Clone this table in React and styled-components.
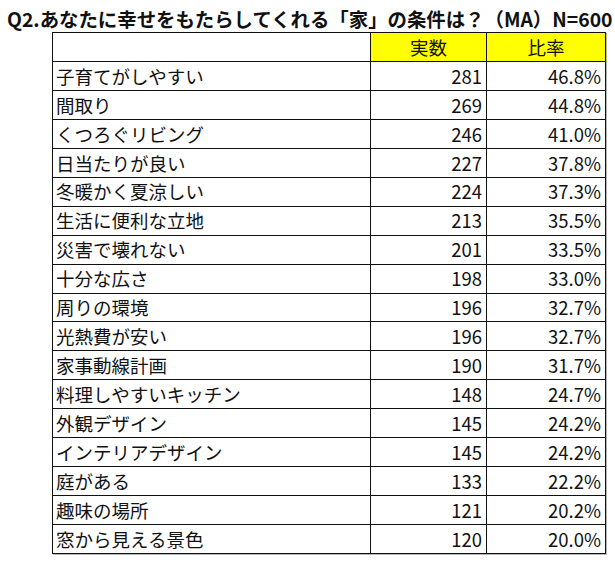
import React from "react";
import styled, { createGlobalStyle } from "styled-components";

const GlobalStyle = createGlobalStyle`
  body {
    margin: 0;
    background: #fff;
    font-family: "Noto Sans CJK JP", "Noto Sans", sans-serif;
    color: #111;
  }
`;

const Root = styled.div`
  width: 615px;
  height: 567px;
  padding: 6px 0 0 0;
  box-sizing: border-box;
`;

const Title = styled.h1`
  margin: 0 0 0 7px;
  font-size: 19.4px;
  font-weight: bold;
  line-height: 26px;
  white-space: nowrap;
`;

const Table = styled.table`
  margin: 0 0 0 52px;
  width: 553px;
  border-collapse: collapse;
  table-layout: fixed;
  box-shadow: 1px 1px 0 #b8b8b8;
`;

const Head = styled.th`
  height: 28px;
  padding: 0;
  border: 1px solid #111;
  background: ${(p) => (p.$blank ? "#fff" : "#ffff00")};
  font-size: 18.5px;
  font-weight: normal;
  text-align: center;
  line-height: 1;
`;

const Cell = styled.td`
  height: 27.95px;
  padding: 0 ${(p) => (p.$num ? "4px" : "0")} 0 ${(p) => (p.$num ? "0" : "3px")};
  border: 1px solid #111;
  font-size: 18.5px;
  text-align: ${(p) => (p.$num ? "right" : "left")};
  line-height: 1;
  white-space: nowrap;
`;

const rows = [
  ["子育てがしやすい", 281, "46.8%"],
  ["間取り", 269, "44.8%"],
  ["くつろぐリビング", 246, "41.0%"],
  ["日当たりが良い", 227, "37.8%"],
  ["冬暖かく夏涼しい", 224, "37.3%"],
  ["生活に便利な立地", 213, "35.5%"],
  ["災害で壊れない", 201, "33.5%"],
  ["十分な広さ", 198, "33.0%"],
  ["周りの環境", 196, "32.7%"],
  ["光熱費が安い", 196, "32.7%"],
  ["家事動線計画", 190, "31.7%"],
  ["料理しやすいキッチン", 148, "24.7%"],
  ["外観デザイン", 145, "24.2%"],
  ["インテリアデザイン", 145, "24.2%"],
  ["庭がある", 133, "22.2%"],
  ["趣味の場所", 121, "20.2%"],
  ["窓から見える景色", 120, "20.0%"],
];

export default function App() {
  return (
    <Root>
      <GlobalStyle />
      <Title>Q2.あなたに幸せをもたらしてくれる「家」の条件は？（MA）N=600</Title>
      <Table>
        <colgroup>
          <col style={{ width: 318 }} />
          <col style={{ width: 116 }} />
          <col style={{ width: 119 }} />
        </colgroup>
        <thead>
          <tr>
            <Head $blank />
            <Head>実数</Head>
            <Head>比率</Head>
          </tr>
        </thead>
        <tbody>
          {rows.map(([label, count, rate]) => (
            <tr key={label}>
              <Cell>{label}</Cell>
              <Cell $num>{count}</Cell>
              <Cell $num>{rate}</Cell>
            </tr>
          ))}
        </tbody>
      </Table>
    </Root>
  );
}
